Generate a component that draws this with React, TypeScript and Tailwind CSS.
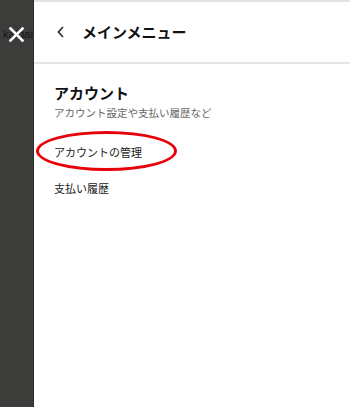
import React from "react";

const menuItems = ["アカウントの管理", "支払い履歴"];

export default function App() {
  return (
    <div
      className="flex h-[407px] w-[350px] overflow-hidden bg-white"
      style={{ fontFamily: '"Noto Sans CJK JP", sans-serif' }}
    >
      {/* Dimmed page behind the drawer */}
      <div className="relative w-[34px] shrink-0 overflow-hidden border-r border-[#2e2f2d] bg-[#3c3d3b]">
        <span
          className="absolute left-[3px] top-[26px] text-[11.5px] text-[#161616]"
          style={{ fontFamily: '"Liberation Sans", sans-serif' }}
        >
          kaigai
        </span>
        <svg
          className="absolute left-[8px] top-[26px]"
          width="17"
          height="17"
          viewBox="0 0 17 17"
          fill="none"
          stroke="white"
          strokeWidth="2.6"
          strokeLinecap="square"
        >
          <path d="M2.5 2.5L14.5 14.5M14.5 2.5L2.5 14.5" />
        </svg>
      </div>

      {/* Drawer */}
      <div className="flex flex-1 flex-col border-t-2 border-[#e2e2e2]">
        <div className="flex h-[62px] items-center border-b-2 border-[#e6e6e6] pl-[22px]">
          <svg width="10" height="14" viewBox="0 0 10 14" fill="none" stroke="#333" strokeWidth="1.8">
            <path d="M7 2L2.5 7L7 12" />
          </svg>
          <span className="ml-[16px] text-[15px] font-bold text-[#111]">メインメニュー</span>
        </div>

        <div className="px-5 pt-[18px]">
          <h2 className="text-[15px] font-bold leading-[22px] text-[#111]">アカウント</h2>
          <p className="mt-[1px] text-[10.5px] leading-[16px] text-[#666]">アカウント設定や支払い履歴など</p>

          <ul className="mt-[13px]">
            {menuItems.map((item, i) => (
              <li key={item} className="relative h-[36px] text-[11px] leading-[36px] text-[#222]">
                {item}
                {i === 0 && (
                  <span className="absolute left-[-18px] top-[-3px] h-[40px] w-[141px] rounded-[50%] border-[3px] border-[#e8000b]" />
                )}
              </li>
            ))}
          </ul>
        </div>
      </div>
    </div>
  );
}
